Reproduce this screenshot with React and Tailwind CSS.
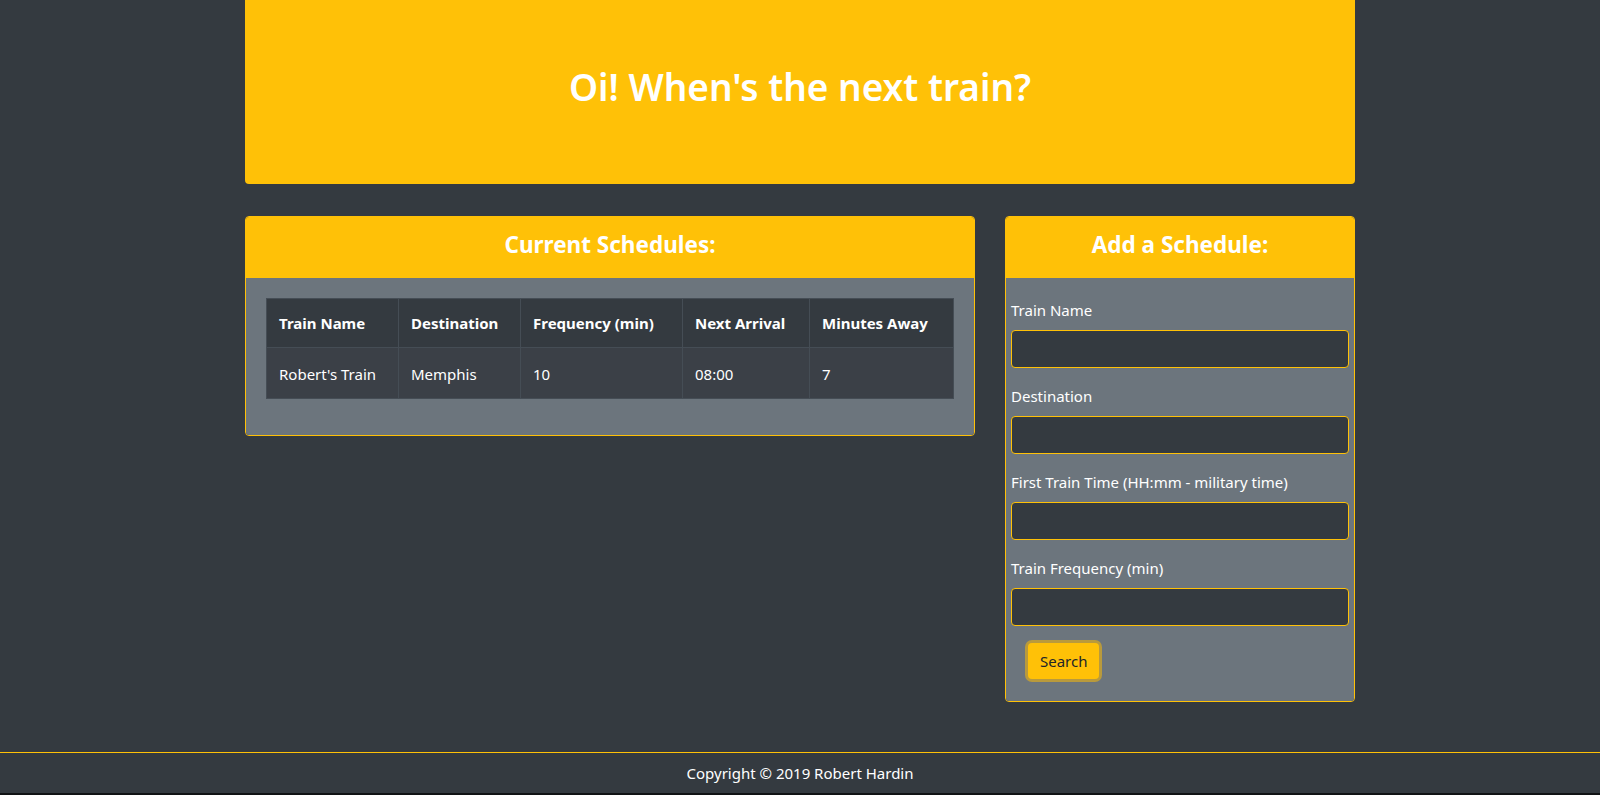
import React from "react";

const rows = [
  { name: "Robert's Train", destination: "Memphis", frequency: "10", next: "08:00", away: "7" },
];

const fields = [
  "Train Name",
  "Destination",
  "First Train Time (HH:mm - military time)",
  "Train Frequency (min)",
];

const App = () => {
  return (
    <div
      className="min-h-[795px] flex flex-col bg-[#343a40] text-white"
      style={{ fontFamily: '"Noto Sans", "Open Sans", sans-serif' }}
    >
      <div className="w-[1110px] mx-auto">
        {/* jumbotron */}
        <div className="bg-[#ffc107] rounded-b-[4px] h-[184px] flex items-center justify-center mb-8">
          <h1 className="text-[37px] font-semibold leading-[48px] -mt-[10px]">
            Oi! When's the next train?
          </h1>
        </div>

        <div className="flex gap-[30px] items-start">
          {/* schedules */}
          <div className="w-[730px] border border-[#ffc107] rounded-[4px] overflow-hidden">
            <div className="bg-[#ffc107] h-[61px] flex items-center justify-center">
              <h4 className="text-[22.5px] font-bold -mt-[5px]">Current Schedules:</h4>
            </div>
            <div className="bg-[#6c757d] p-5 pb-9">
              <table className="w-full bg-[#343a40] text-[15px] border-collapse">
                <thead>
                  <tr className="h-[49px]">
                    <th className="w-[132px] text-left font-bold px-3 border border-[#454d55]">Train Name</th>
                    <th className="w-[122px] text-left font-bold px-3 border border-[#454d55]">Destination</th>
                    <th className="w-[162px] text-left font-bold px-3 border border-[#454d55]">Frequency (min)</th>
                    <th className="w-[127px] text-left font-bold px-3 border border-[#454d55]">Next Arrival</th>
                    <th className="text-left font-bold px-3 border border-[#454d55]">Minutes Away</th>
                  </tr>
                </thead>
                <tbody>
                  {rows.map((r) => (
                    <tr key={r.name} className="h-[51px] bg-[#3b4047]">
                      <td className="px-3 pt-[2px] border border-[#454d55]">{r.name}</td>
                      <td className="px-3 pt-[2px] border border-[#454d55]">{r.destination}</td>
                      <td className="px-3 pt-[2px] border border-[#454d55]">{r.frequency}</td>
                      <td className="px-3 pt-[2px] border border-[#454d55]">{r.next}</td>
                      <td className="px-3 pt-[2px] border border-[#454d55]">{r.away}</td>
                    </tr>
                  ))}
                </tbody>
              </table>
            </div>
          </div>

          {/* add form */}
          <div className="w-[350px] border border-[#ffc107] rounded-[4px] overflow-hidden">
            <div className="bg-[#ffc107] h-[61px] flex items-center justify-center">
              <h4 className="text-[22.5px] font-bold -mt-[5px]">Add a Schedule:</h4>
            </div>
            <div className="bg-[#6c757d] pt-5 px-[5px] pb-[20px]">
              {fields.map((f) => (
                <div key={f} className="mb-4">
                  <label className="block text-[15px] leading-6 mb-2">{f}</label>
                  <input
                    type="text"
                    className="block w-full h-[38px] bg-[#343a40] border border-[#ffc107] rounded-[4px] px-3 outline-none"
                  />
                </div>
              ))}
              <button className="ml-[17px] mt-[1px] mb-[2px] h-[36px] px-3 bg-[#ffc107] text-[#212529] text-[15px] rounded-[4px] ring-[3px] ring-[#b99a3c]">
                Search
              </button>
            </div>
          </div>
        </div>
      </div>

      <footer className="mt-auto">
        <div className="border-t border-[#ffc107] shadow-[0_1px_2px_#5a4a1c] h-[41px] flex items-center justify-center text-[15px]">
          Copyright © 2019 Robert Hardin
        </div>
        <div className="h-[2px] bg-[#111315]"></div>
      </footer>
    </div>
  );
};

export default App;
